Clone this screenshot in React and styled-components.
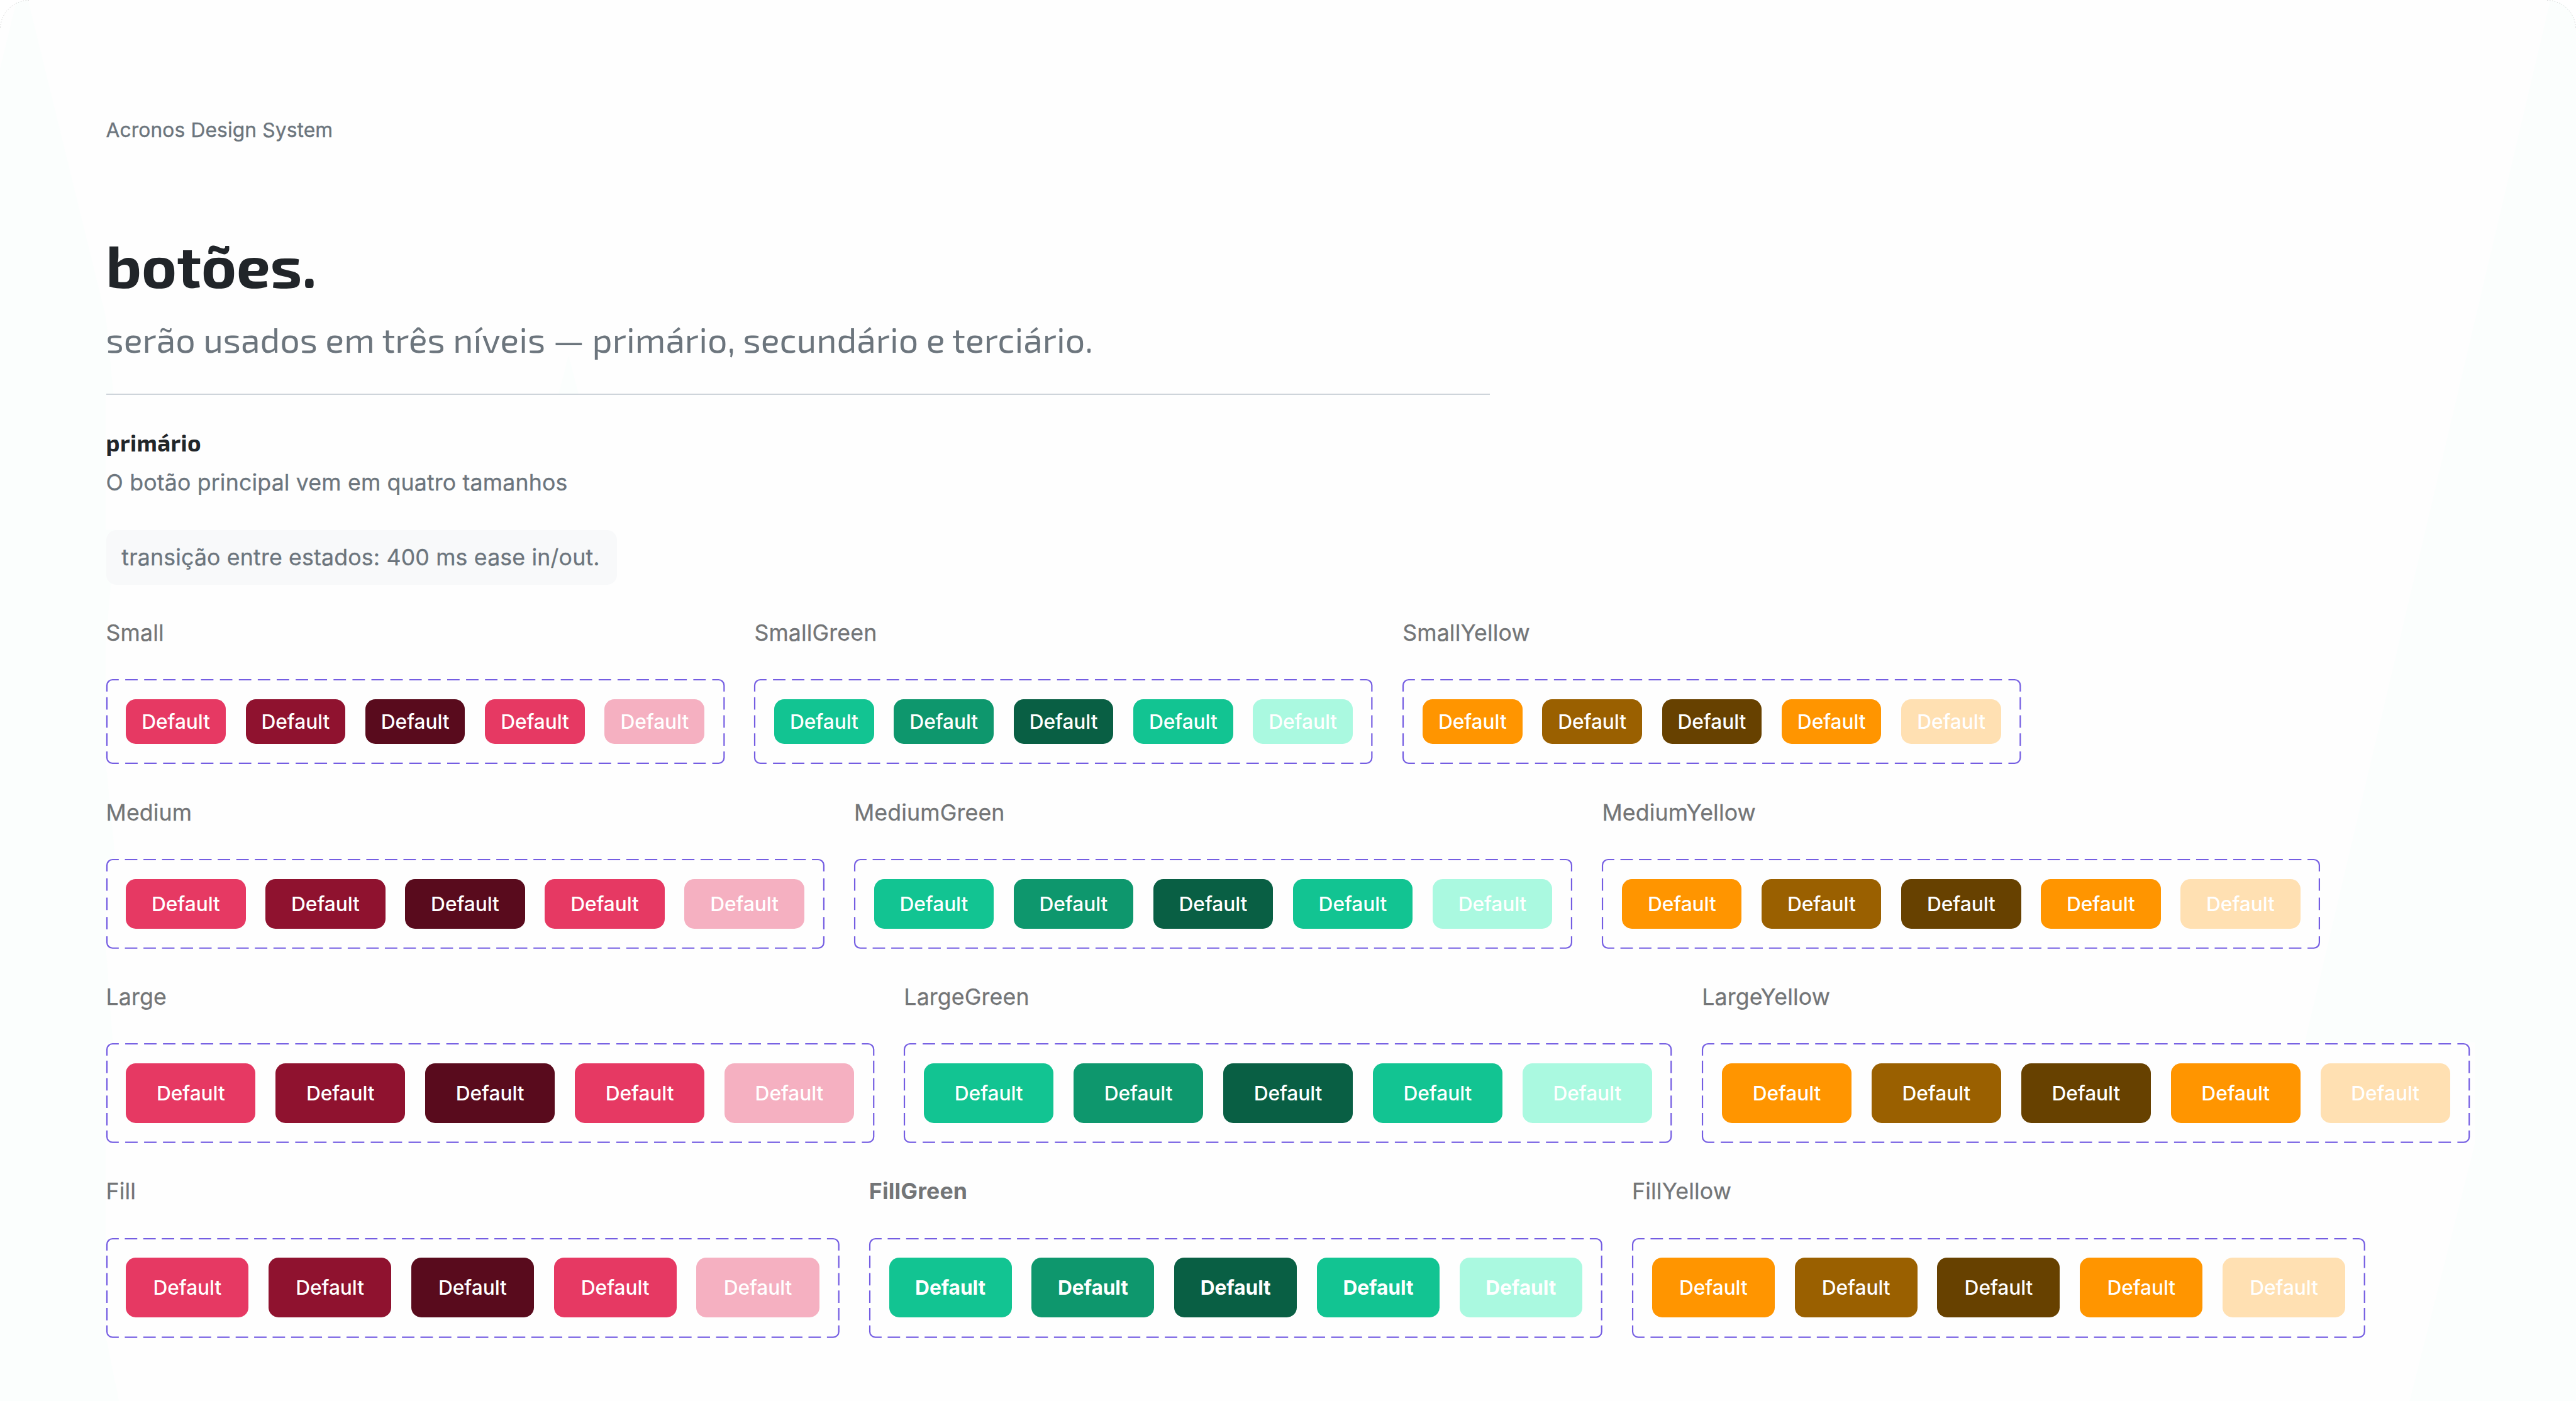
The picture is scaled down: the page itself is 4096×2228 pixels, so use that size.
import React from "react";
import styled, { createGlobalStyle } from "styled-components";

const GlobalStyle = createGlobalStyle`
  *, *::before, *::after { box-sizing: border-box; }
  html, body { margin: 0; background: #ffffff; overflow: hidden; }
  body { font-family: Inter, "Liberation Sans", sans-serif; }
`;

const Page = styled.main`
  position: relative;
  width: 4132px;
  height: 2248px;
  zoom: ${4096 / 4132};
  overflow: hidden;
  padding: 189px 160px 0 170px;
  background: #fefefe;
`;

const Backdrop = styled.svg`
  position: absolute;
  inset: 0;
  width: 4132px;
  height: 2248px;
`;

const Content = styled.div`
  position: relative;
  display: flex;
  flex-direction: column;
  align-items: flex-start;
`;

const Brand = styled.p`
  margin: 0 0 127px;
  font-size: 32px;
  font-weight: 400;
  line-height: 40px;
  letter-spacing: 0.13px;
  -webkit-text-stroke: 0.4px currentColor;
  color: #6c757d;
`;

const Title = styled.h1`
  margin: 0;
  font-family: "Exo 2", "Noto Sans", sans-serif;
  font-size: 96px;
  font-weight: 700;
  line-height: 136px;
  color: #212529;
`;

const Lead = styled.p`
  margin: 12px 0 0;
  font-family: "Exo 2", "Noto Sans", sans-serif;
  font-size: 56px;
  font-weight: 400;
  line-height: 80px;
  color: #6c757d;
`;

const Rule = styled.hr`
  width: 2220px;
  height: 2px;
  margin: 48px 0 0;
  border: 0;
  background: #ced4da;
`;

const SectionTitle = styled.h2`
  margin: 52px 0 0;
  font-family: "Exo 2", "Noto Sans", sans-serif;
  font-size: 37px;
  font-weight: 700;
  line-height: 48px;
  letter-spacing: 0.4px;
  color: #212529;
`;

const SectionText = styled.p`
  margin: 19px 0 0;
  font-size: 36px;
  line-height: 44px;
  letter-spacing: 0.17px;
  -webkit-text-stroke: 0.3px currentColor;
  color: #6c757d;
`;

const Note = styled.p`
  display: flex;
  align-items: center;
  width: 820px;
  height: 88px;
  margin: 53px 0 0;
  padding: 0 25px;
  border-radius: 16px;
  background: #f8f9fa;
  font-size: 36px;
  letter-spacing: 0.17px;
  white-space: nowrap;
  -webkit-text-stroke: 0.3px currentColor;
  color: #6c757d;
`;

const Rows = styled.section`
  display: flex;
  flex-direction: column;
  gap: 56px;
  margin-top: 56px;
`;

const Row = styled.div`
  display: flex;
  gap: 48px;
`;

const Group = styled.div`
  display: flex;
  flex-direction: column;
  gap: 52px;
`;

const GroupLabel = styled.h3`
  margin: 0;
  font-size: 36px;
  font-weight: ${(p) => (p.$bold ? 700 : 400)};
  line-height: 44px;
  letter-spacing: 0.15px;
  -webkit-text-stroke: ${(p) => (p.$bold ? 0 : 0.3)}px currentColor;
  color: #737577;
`;

const Frame = styled.div`
  position: relative;
  display: flex;
  gap: 32px;
  padding: 32px;
  background: #fefefe;
`;

const Outline = styled.svg`
  position: absolute;
  inset: 0;
  overflow: visible;
  fill: none;
  stroke: #745de2;
  stroke-width: 2.2px;
`;

const Button = styled.button`
  display: flex;
  align-items: center;
  justify-content: center;
  width: ${(p) => p.$width}px;
  height: ${(p) => p.$height}px;
  padding: 0;
  border: 0;
  border-radius: 16px;
  background: ${(p) => p.$color};
  color: #ffffff;
  font-family: inherit;
  font-size: 32px;
  font-weight: ${(p) => (p.$bold ? 700 : 500)};
  letter-spacing: -0.1px;
  transition: background 400ms ease-in-out;
`;

const palettes = {
  pink: ["#e63963", "#8f122f", "#590b1d", "#e63963", "#f5b0c1"],
  green: ["#12c492", "#0e976d", "#095f44", "#12c492", "#aaf9e0"],
  yellow: ["#ff9500", "#9a6000", "#674100", "#ff9500", "#ffe0b2"],
};

const rows = [
  { name: "Small", width: 160, height: 72 },
  { name: "Medium", width: 192, height: 80 },
  { name: "Large", width: 208, height: 96 },
  { name: "Fill", width: 196.8, height: 96 },
];

const groups = [
  { suffix: "", palette: palettes.pink },
  { suffix: "Green", palette: palettes.green },
  { suffix: "Yellow", palette: palettes.yellow },
];

const DASH = 20;

// Each side starts and ends on a full dash, so the gaps stretch to fit its length.
function dashes(length) {
  const step = (length - DASH) / Math.round((length - DASH) / 30);
  return { step, gap: step - DASH };
}

function DashedOutline({ width, height }) {
  const h = dashes(width);
  const v = dashes(height);
  const r = width - 1;
  const b = height - 1;
  return (
    <Outline width={width} height={height} viewBox={`0 0 ${width} ${height}`}>
      <path
        d={`M1 20V10a9 9 0 0 1 9-9H20M${width - 20} 1h10a9 9 0 0 1 9 9V20M${r} ${height - 20}v10a9 9 0 0 1-9 9H${width - 20}M20 ${b}H10a9 9 0 0 1-9-9V${height - 20}`}
      />
      <path
        d={`M${h.step} 1H${width - h.step}M${h.step} ${b}H${width - h.step}`}
        strokeDasharray={`${DASH} ${h.gap}`}
      />
      <path
        d={`M1 ${v.step}V${height - v.step}M${r} ${v.step}V${height - v.step}`}
        strokeDasharray={`${DASH} ${v.gap}`}
      />
    </Outline>
  );
}

function ButtonGroup({ label, palette, width, height, bold }) {
  return (
    <Group>
      <GroupLabel $bold={bold}>{label}</GroupLabel>
      <Frame>
        <DashedOutline width={width * 5 + 192} height={height + 64} />
        {palette.map((color, i) => (
          <Button key={i} $color={color} $width={width} $height={height} $bold={bold}>
            Default
          </Button>
        ))}
      </Frame>
    </Group>
  );
}

export default function App() {
  return (
    <>
      <GlobalStyle />
      <Page>
        <Backdrop viewBox="0 0 4132 2248" aria-hidden="true">
          <g fill="#fbfefd">
            <path d="M27 0H45L170 510L182 632V634H170V850L185 850L170 1030V1226L185 1378H170V1522L181 1674H170V2146L191 2248H0V110Z" />
            <path d="M4091 0L3697 1672H3970V1834L3865 2248H4132V0Z" />
            <path d="M912 570L928 632H896Z" />
          </g>
          <path d="M0 0H46A46 46 0 0 0 0 46ZM4132 0H4086A46 46 0 0 1 4132 46Z" fill="#ffffff" />
          <path d="M46 0.5A46 46 0 0 0 0.5 46M4086 0.5A46 46 0 0 1 4131.5 46" fill="none" stroke="#b8b8b8" strokeDasharray="1 3" />
        </Backdrop>
        <Content>
          <Brand>Acronos Design System</Brand>
          <Title>botões.</Title>
          <Lead>serão usados em três níveis — primário, secundário e terciário.</Lead>
          <Rule />
          <SectionTitle>primário</SectionTitle>
          <SectionText>O botão principal vem em quatro tamanhos</SectionText>
          <Note>transição entre estados: 400 ms ease in/out.</Note>
          <Rows>
            {rows.map((row) => (
              <Row key={row.name}>
                {groups.map((group) => (
                  <ButtonGroup
                    key={group.suffix}
                    label={row.name + group.suffix}
                    palette={group.palette}
                    width={row.width}
                    height={row.height}
                    bold={row.name === "Fill" && group.suffix === "Green"}
                  />
                ))}
              </Row>
            ))}
          </Rows>
        </Content>
      </Page>
    </>
  );
}
